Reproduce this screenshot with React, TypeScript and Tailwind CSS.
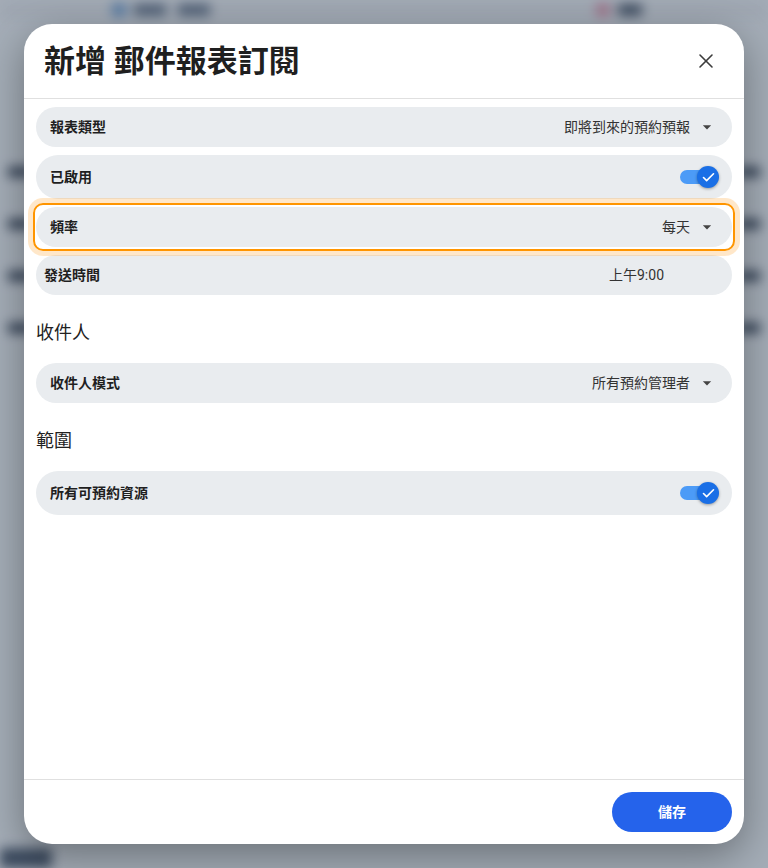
import { X, Check } from 'lucide-react';

const font = { fontFamily: 'Roboto, "Noto Sans CJK TC", sans-serif' };

function Caret() {
  return (
    <svg width="20" height="20" viewBox="0 0 24 24" className="shrink-0 text-[#444]">
      <path d="M7 10l5 5 5-5z" fill="currentColor" />
    </svg>
  );
}

function Toggle() {
  return (
    <div className="relative flex h-7 w-10 items-center">
      <div className="h-[14px] w-[28px] rounded-full bg-[#4c9bf7]" />
      <div className="absolute right-[1px] top-[3px] flex h-[22px] w-[22px] items-center justify-center rounded-full bg-[#1a6fe6] shadow-[0_1px_3px_rgba(0,0,0,0.35)]">
        <Check size={15} strokeWidth={2.6} className="text-white" />
      </div>
    </div>
  );
}

function SelectRow({ label, value }: { label: string; value: string }) {
  return (
    <div className="flex h-10 items-center justify-between rounded-full bg-[#e9ecef] pl-[14px] pr-[15px]">
      <span className="text-sm font-bold text-[#1f1f1f]">{label}</span>
      <div className="flex items-center gap-[7px]">
        <span className="text-sm text-[#333]">{value}</span>
        <Caret />
      </div>
    </div>
  );
}

function ToggleRow({ label }: { label: string }) {
  return (
    <div className="flex h-11 items-center justify-between rounded-full bg-[#e9ecef] pl-[14px] pr-[12px]">
      <span className="text-sm font-bold text-[#1f1f1f]">{label}</span>
      <Toggle />
    </div>
  );
}

export default function App() {
  return (
    <div className="relative h-[868px] w-[768px] overflow-hidden bg-[#f1f5f9]" style={font}>
      {/* page behind the modal, blurred */}
      <div className="flex h-full flex-col blur-[6px]">
        <div className="flex h-[20px] items-center bg-[#e8ebf0] pl-[112px]">
          <div className="h-3.5 w-3.5 rounded bg-[#6f9fd4]" />
          <div className="ml-2 h-3 w-[32px] bg-[#64748b]" />
          <div className="ml-3 h-3 w-[32px] bg-[#64748b]" />
          <div className="ml-[386px] h-3.5 w-3.5 rounded bg-[#e595ad]" />
          <div className="ml-2 h-3 w-[24px] bg-[#475569]" />
        </div>
        <div className="flex flex-col gap-[36px] pt-[144px]">
          {[0, 1, 2, 3].map((i) => (
            <div key={i} className="flex h-[16px] items-center justify-between px-2">
              <div className="h-2.5 w-[24px] bg-[#334155]" />
              <div className="h-2.5 w-[22px] bg-[#334155]" />
            </div>
          ))}
        </div>
        <div className="mt-auto h-5 w-[52px] bg-[#475569]" />
      </div>
      <div className="absolute inset-0 bg-[#334155]/40" />

      {/* modal */}
      <div className="absolute left-6 top-6 flex h-[820px] w-[720px] flex-col overflow-hidden rounded-[28px] bg-white shadow-[0_12px_40px_rgba(0,0,0,0.35)]">
        <div className="flex h-[75px] shrink-0 items-center justify-between border-b border-[#e0e0e0] pl-5 pr-[26px]">
          <h2 className="text-[31px] font-bold leading-none text-[#1f1f1f]">新增 郵件報表訂閱</h2>
          <X size={24} strokeWidth={1.6} className="text-[#3c3c3c]" />
        </div>

        <div className="flex flex-1 flex-col px-3 pt-2">
          <div className="flex flex-col gap-2">
            <SelectRow label="報表類型" value="即將到來的預約預報" />
            <ToggleRow label="已啟用" />
            <div className="relative">
              <SelectRow label="頻率" value="每天" />
              <div className="pointer-events-none absolute -inset-x-[3px] -inset-y-[4px] rounded-[10px] border-2 border-[#ff9500] shadow-[0_0_0_5px_rgba(255,170,60,0.28)]" />
            </div>
            <div className="flex h-10 items-center justify-between rounded-full bg-[#e9ecef] pl-2 pr-[68px]">
              <span className="text-sm font-bold text-[#1f1f1f]">發送時間</span>
              <span className="text-sm text-[#333]">上午9:00</span>
            </div>
          </div>

          <h3 className="mb-4 mt-6 text-lg leading-7 text-[#222]">收件人</h3>
          <SelectRow label="收件人模式" value="所有預約管理者" />

          <h3 className="mb-4 mt-6 text-lg leading-7 text-[#222]">範圍</h3>
          <ToggleRow label="所有可預約資源" />
        </div>

        <div className="flex shrink-0 justify-end border-t border-[#e0e0e0] p-3">
          <button className="h-10 w-[120px] rounded-full bg-[#2563eb] text-sm font-bold text-white">儲存</button>
        </div>
      </div>
    </div>
  );
}
